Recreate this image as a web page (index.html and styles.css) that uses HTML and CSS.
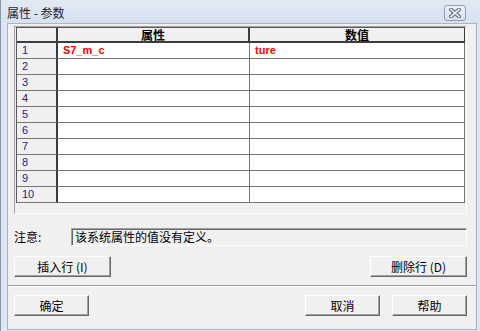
FILE: index.html
```html
<!DOCTYPE html>
<html lang="zh">
<head>
<meta charset="utf-8">
<title>属性 - 参数</title>
<link rel="stylesheet" href="styles.css">
</head>
<body>
<div class="window">
  <div class="titlebar">
    <span class="title">属性 - 参数</span>
    <span class="close">
      <svg width="12" height="10" viewBox="0 0 12 10">
        <path d="M2 1.5 L10 8.5 M10 1.5 L2 8.5" stroke="#6b7788" stroke-width="4" stroke-linecap="square" fill="none"/>
        <path d="M2 1.5 L10 8.5 M10 1.5 L2 8.5" stroke="#eef2f7" stroke-width="1.6" stroke-linecap="square" fill="none"/>
      </svg>
    </span>
  </div>
  <div class="client">
    <div class="grid">
      <table class="table">
        <thead>
          <tr>
            <th class="c0"></th>
            <th class="c1">属性</th>
            <th class="c2">数值</th>
          </tr>
        </thead>
        <tbody>
          <tr><td class="rh">1</td><td class="val">S7_m_c</td><td class="val">ture</td></tr>
          <tr><td class="rh">2</td><td></td><td></td></tr>
          <tr><td class="rh">3</td><td></td><td></td></tr>
          <tr><td class="rh">4</td><td></td><td></td></tr>
          <tr><td class="rh">5</td><td></td><td></td></tr>
          <tr><td class="rh">6</td><td></td><td></td></tr>
          <tr><td class="rh">7</td><td></td><td></td></tr>
          <tr><td class="rh">8</td><td></td><td></td></tr>
          <tr><td class="rh">9</td><td></td><td></td></tr>
          <tr><td class="rh">10</td><td></td><td></td></tr>
        </tbody>
      </table>
    </div>
    <div class="note">
      <span class="note-label">注意:</span>
      <div class="note-box">该系统属性的值没有定义。</div>
    </div>
    <div class="row-btns">
      <button class="btn wide">插入行 (I)</button>
      <button class="btn wide">删除行 (D)</button>
    </div>
    <div class="sep"></div>
    <div class="bottom-btns">
      <button class="btn">确定</button>
      <button class="btn push">取消</button>
      <button class="btn">帮助</button>
    </div>
  </div>
</div>
</body>
</html>
```
FILE: styles.css
```css
html, body {
  margin: 0;
  padding: 0;
}
body {
  width: 480px;
  height: 331px;
  overflow: hidden;
  background: #dde6f1;
  font-family: "Noto Sans CJK SC", "Liberation Sans", sans-serif;
  font-size: 12px;
  color: #000;
}
.window {
  display: flex;
  flex-direction: column;
  width: 480px;
  height: 331px;
  box-sizing: border-box;
  border-left: 1px solid #8896a8;
  background: #dde6f1;
}
.titlebar {
  height: 23px;
  display: flex;
  align-items: flex-start;
  background: linear-gradient(#e2eaf4, #d6e1ef);
}
.title {
  margin-top: 5px;
  margin-left: 6px;
  line-height: 16px;
  font-size: 12px;
  color: #1f1f1f;
}
.close {
  margin-left: auto;
  margin-right: 14px;
  margin-top: 5px;
  width: 22px;
  height: 16px;
  box-sizing: border-box;
  border: 1px solid #8e9db3;
  border-radius: 3px;
  background: linear-gradient(#eef3f9, #d5dfec);
  display: flex;
  align-items: center;
  justify-content: center;
}
.client {
  flex: 1;
  margin: 0 3px 1px 6px;
  border: 1px solid #a7b4c4;
  background: #f0f0f0;
  padding: 2px 9px 13px 6px;
  display: flex;
  flex-direction: column;
}
.grid {
  height: 188px;
  box-sizing: border-box;
  border: 1px solid;
  border-color: #a0a0a0 #ffffff #ffffff #a0a0a0;
  padding: 0 1px;
  background: #f0f0f0;
}
.table {
  border-collapse: separate;
  border-spacing: 0;
  table-layout: fixed;
  width: 449px;
  border-top: 1px solid #5a5a5a;
  border-left: 1px solid #5a5a5a;
}
.table th, .table td {
  box-sizing: border-box;
  padding: 0;
  border-right: 1px solid #767676;
  border-bottom: 1px solid #767676;
  white-space: nowrap;
}
.table th {
  height: 15px;
  background: #f0f0f0;
  font-weight: bold;
  font-size: 12px;
  line-height: 13px;
  text-align: center;
  border-bottom: 2px solid #3c3c3c;
  border-right: 2px solid #3c3c3c;
}
.table .c0 { width: 41px; }
.table .c1 { width: 192px; }
.table .c2 { width: 215px; border-right: 1px solid #3c3c3c; }
.table td {
  height: 16px;
  background: #fff;
  line-height: 15px;
}
.table td.rh {
  background: #f0f0f0;
  border-right: 2px solid #3c3c3c;
  padding-left: 5px;
  font-family: "Liberation Sans", sans-serif;
  font-size: 11px;
  color: #3a1670;
}
.table td.val {
  padding-left: 5px;
  font-family: "Liberation Sans", sans-serif;
  font-weight: bold;
  font-size: 11px;
  color: #ff0000;
}
.note {
  margin-top: 14px;
  display: flex;
  align-items: center;
}
.note-label {
  flex: 0 0 57px;
  line-height: 18px;
}
.note-box {
  flex: 1;
  height: 18px;
  box-sizing: border-box;
  border: 1px solid;
  border-color: #a0a0a0 #ffffff #ffffff #a0a0a0;
  box-shadow: inset 1px 1px 0 #696969;
  padding-left: 3px;
  line-height: 16px;
  background: #f0f0f0;
}
.row-btns {
  margin-top: 10px;
  display: flex;
  justify-content: space-between;
}
.btn {
  height: 21px;
  width: 75px;
  box-sizing: border-box;
  padding: 0;
  margin: 0;
  border: 1px solid;
  border-color: #ffffff #696969 #696969 #ffffff;
  box-shadow: inset -1px -1px 0 #a0a0a0;
  background: #f0f0f0;
  font-family: "Noto Sans CJK SC", "Liberation Sans", sans-serif;
  font-size: 12px;
  line-height: 18px;
  color: #000;
}
.btn.wide {
  width: 97px;
}
.sep {
  margin: 8px -9px 8px -6px;
  height: 2px;
  box-sizing: border-box;
  border-top: 1px solid #a0a0a0;
  border-bottom: 1px solid #ffffff;
}
.bottom-btns {
  display: flex;
  gap: 12px;
}
.btn.push {
  margin-left: auto;
}
```
